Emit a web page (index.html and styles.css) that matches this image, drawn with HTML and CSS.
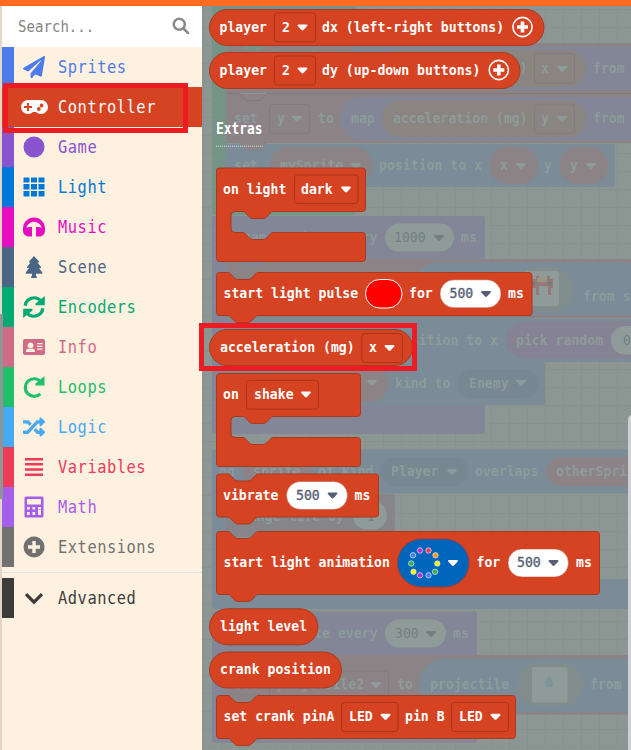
FILE: index.html
```
<!DOCTYPE html>
<html lang="en">
<head>
<meta charset="utf-8">
<title>Blocks editor</title>
<link rel="stylesheet" href="styles.css">
</head>
<body>
<div class="topbar"></div>
<main class="editor">
  <div class="edge"><div class="edge-shade"></div></div>
  <nav class="toolbox">
    <div class="search"><span>Search...</span>
      <svg class="search-icon" viewBox="0 0 18 18"><circle cx="7.3" cy="7.3" r="5.5"/><path d="M11.5 11.5L16 16"/></svg>
    </div>
    <div class="row sprites"><svg class="icon" viewBox="0 0 512 512"><path d="M476 3.2L12.5 270.6c-18.1 10.4-15.8 35.6 2.2 43.2L121 358.4l287.3-253.2c5.5-4.9 13.3 2.6 8.6 8.3L176 407v80.5c0 23.6 28.5 32.9 42.5 15.8L282 426l124.6 52.2c14.2 6 30.4-2.9 33-18.2l72-432C515 7.8 493.3-6.8 476 3.2z"/></svg><span>Sprites</span></div>
    <div class="row controller"><svg class="icon wide" viewBox="0 0 27 14"><path fill-rule="evenodd" d="M7 0h13a7 7 0 0 1 0 14q-3 0-5-2h-3q-2 2-5 2A7 7 0 0 1 7 0zM6 3v3H3v2h3v3h2V8h3V6H8V3zM20.5 3.6a1.9 1.9 0 1 0 .1 0zM17.8 7.1a1.9 1.9 0 1 0 .1 0z"/></svg><span>Controller</span></div>
    <div class="row game"><svg class="icon" viewBox="0 0 22 22"><circle cx="11" cy="11" r="10.500"/></svg><span>Game</span></div>
    <div class="row light"><svg class="icon" viewBox="0 0 22 22"><path d="M1 1.5h5.5v5H.5V2zM8 1.5h6v5H8zM15.5 1.5H21l.5.5v4.5h-6zM.5 8h6v5.500h-6zM8 8h6v5.500H8zM15.500 8h6v5.500h-6zM.5 15h6v5.500H1L.5 20zM8 15h6v5.500H8zM15.500 15h6v5l-.5.5h-5.500z"/></svg><span>Light</span></div>
    <div class="row music"><svg class="icon" viewBox="0 0 22 22"><path d="M11 1.500A11 11 0 0 0 0 12.500v2q0 4 3.500 5.500l1 .5H9V11H6q-1.500 0-2.500 1A7.600 7.600 0 0 1 18.500 12q-1-1-2.500-1h-3v9.500h4.500l1-.5Q22 18.500 22 14.500v-2a11 11 0 0 0-11-11z"/></svg><span>Music</span></div>
    <div class="row scene"><svg class="icon" viewBox="0 0 22 22"><path d="M11 0l5 5.500q.5 1-.5 1h-1l3.500 4.500q.5 1-.5 1h-1.500l3.300 4.500q.6 1.100-.6 1.200H13v1.800l1 1.500q.2 1-1 1H9q-1.200 0-1-1l1-1.500v-1.800H3.500q-1.500-.1-.7-1.200L6 12H4.500q-1 0-.5-1l3.500-4.500h-1q-1 0-.5-1z"/></svg><span>Scene</span></div>
    <div class="row encoders"><svg class="icon" viewBox="0 0 22 22"><g id="reload" class="line"><path d="M2.200 9.800A9 9 0 0 1 18 5"/><path class="head" d="M21.800.3v9H12.500V7.500L21.500.2z"/></g><use href="#reload" transform="rotate(180 11 11)"/></svg><span>Encoders</span></div>
    <div class="row info"><svg class="icon" viewBox="0 0 22 22"><path fill-rule="evenodd" d="M2 3h18q2 0 2 2v12q0 2-2 2H2q-2 0-2-2V5q0-2 2-2zM7.500 6.500a3 3 0 1 0 .1 0zM5 12.500q-2 .5-2 2.500v1h9v-1q0-2-2-2.500l-2.500.5zM14 7v1.300h5.500V7zM14 9.700V11h5.500V9.700zM14 12.400v1.300h5.500v-1.300z"/></svg><span>Info</span></div>
    <div class="row loops"><svg class="icon" viewBox="0 0 22 22"><g class="line"><path d="M17.500 5.500A8.800 8.800 0 1 0 17.300 17.800"/><path class="head" d="M21.500.5v9H12.500V7.600L21 .5z"/></g></svg><span>Loops</span></div>
    <div class="row logic"><svg class="icon" viewBox="0 0 512 512"><path d="M504.971 359.029c9.373 9.373 9.373 24.569 0 33.941l-80 79.984c-15.01 15.01-40.971 4.49-40.971-16.971V416h-58.785a12.004 12.004 0 0 1-8.773-3.812l-70.556-75.596 53.333-57.143L352 336h32v-39.981c0-21.438 25.943-31.998 40.971-16.971l80 79.981zM12 176h84l52.781 56.551 53.333-57.143-70.556-75.596A11.999 11.999 0 0 0 122.785 96H12c-6.627 0-12 5.373-12 12v56c0 6.627 5.373 12 12 12zm372 0v39.984c0 21.460 25.961 31.980 40.971 16.971l80-79.984c9.373-9.373 9.373-24.569 0-33.941l-80-79.981C409.943 24.021 384 34.582 384 56.019V96h-58.785a12.004 12.004 0 0 0-8.773 3.812L96 336H12c-6.627 0-12 5.373-12 12v56c0 6.627 5.373 12 12 12h110.785c3.326 0 6.503-1.381 8.773-3.812L352 176h32z"/></svg><span>Logic</span></div>
    <div class="row variables"><svg class="icon" viewBox="0 0 22 22"><path d="M2 2h18v2.600H2zM2 7h18v2.600H2zM2 12.200h18v2.600H2zM2 17.500h18v2.600H2z"/></svg><span>Variables</span></div>
    <div class="row math"><svg class="icon" viewBox="0 0 22 22"><path fill-rule="evenodd" d="M3 .5h16q1.500 0 1.500 1.500v18q0 1.500-1.500 1.500H3Q1.500 21.500 1.500 20V2Q1.500.5 3 .5zM4 3v5.500h14V3zM4 11v2.500h2.700V11zM9.500 11v2.500h2.700V11zM15 11v2.500h3V11zM4 16v3h2.700v-3zM9.500 16v3h2.700v-3zM15 13v6h3v-6z"/></svg><span>Math</span></div>
    <div class="row extensions"><svg class="icon" viewBox="0 0 22 22"><path fill-rule="evenodd" d="M11 .5a10.500 10.500 0 1 0 .1 0zM9.300 5h3.400v4.300H17v3.400h-4.300V17H9.300v-4.300H5V9.300h4.300z"/></svg><span>Extensions</span></div>
    <div class="divider"></div>
    <div class="row advanced"><svg class="icon" viewBox="0 0 22 22"><path class="chevron" d="M3 7.200l8 8 8-8"/></svg><span>Advanced</span></div>
  </nav>
  <svg class="canvas" viewBox="202 6 429 744" width="429" height="744">
    <defs>
      <pattern id="grid" x="5" y="9" width="18" height="18" patternUnits="userSpaceOnUse"><path d="M0 .5h18M.5 0v18" stroke="#87928f"/></pattern>
      <path id="arrow" d="M-4-3h8q1.500.4.700 1.600L1 2.600q-1 .9-2 0l-3.700-4Q-5.500-2.600-4-3z"/>
      <g id="plus"><circle r="9.600" fill="none" stroke="#fff" stroke-width="1.600"/><path d="M-5.500 0h11M0-5.500v11" stroke="#fff" stroke-width="3.600"/></g>
    </defs>
    <rect x="202" y="6" width="429" height="744" fill="#8c9692"/>
    <rect x="202" y="6" width="429" height="744" fill="url(#grid)"/>

    <!-- workspace stacks -->
    <g class="workspace">
      <path class="green" d="M212 6h144v3H226v194h126q4 0 4 4v4q0 4-4 4H216q-4 0-4-4z"/>
      <path class="rose" d="M226 43H631V93H226zM226 94H631V143H226z"/>
      <path class="green" d="M239 43l7 7h14l7-7z"/>
      <path class="seam" d="M226 93.500h13l7 7h14l7-7H631"/>
      <rect class="violet" x="340" y="46.500" width="310" height="43.500" rx="21.700"/>
      <rect class="violet" x="340" y="97" width="310" height="43.500" rx="21.700"/>
      <rect class="olive" x="382" y="50" width="204" height="37" rx="18.500"/>
      <rect class="olive" x="382" y="100.500" width="204" height="36.500" rx="18.200"/>
      <rect class="box" x="534.500" y="53.500" width="40" height="29.500" rx="3"/><rect class="box" x="534.500" y="104" width="40" height="29.500" rx="3"/><rect class="box" x="269.500" y="104.500" width="40" height="29" rx="3"/>
      <text x="519.500" y="73">)</text><text x="541" y="73">x</text><use href="#arrow" x="562" y="69"/><text x="593" y="73">from</text>
      <text x="234" y="123">set</text><text x="277" y="123">y</text><use href="#arrow" x="297" y="119"/><text x="318" y="123">to</text><text x="351" y="123">map</text><text x="393" y="123">acceleration (mg)</text><text x="541" y="123">y</text><use href="#arrow" x="562" y="119"/><text x="593" y="123">from</text>
      <path class="blue" d="M226 144H612q3 0 3 3v37q0 3-3 3H226z"/>
      <path class="rose" d="M239 143l7 7h14l7-7z"/>
      <rect class="rose" x="270" y="147" width="102" height="37" rx="18"/><rect class="rose" x="489.500" y="147" width="48.500" height="37" rx="18"/><rect class="rose" x="559.500" y="147" width="48.500" height="37" rx="18"/>
      <text x="234" y="170">set</text><text x="280" y="170">mySprite</text><use href="#arrow" x="356" y="166"/><text x="379" y="170">position to x</text><text x="500" y="170">x</text><use href="#arrow" x="521" y="166"/><text x="544" y="170">y</text><text x="570" y="170">y</text><use href="#arrow" x="591" y="166"/>

      <rect class="violet" x="212" y="216" width="273" height="43" rx="3"/>
      <path class="violet" d="M212 219h14V405H482q3 0 3 3v23q0 3-3 3H215q-3 0-3-3z"/>
      <text x="219" y="242">on game update every</text><rect class="pale" x="385" y="223.500" width="69" height="28" rx="14"/><text class="dark" x="394" y="242">1000</text><use class="dark" href="#arrow" x="439" y="238"/><text x="461" y="242">ms</text>
      <path class="rose" d="M226 259H631v59H226z"/><path class="violet" d="M239 259l7 7h14l7-7z"/>
      <rect class="blue" x="412" y="262.500" width="240" height="52.500" rx="26"/>
      <rect class="sage" x="514" y="266.500" width="60" height="45" rx="22"/><rect class="pale" x="525" y="271" width="34" height="35" rx="2"/>
      <path d="M532 279h4v-3h3v3h8v-3h3v3h3v9h-2v7h-3v-9h-9v9h-3v-7h-4z" fill="#96777a"/><path d="M537 278h10v4h-10z" fill="#99977d"/><path d="M532 282h3v3h-3zM548 282h3v3h-3z" fill="#65817f"/>
      <text x="583" y="301">from s</text>
      <path class="blue" d="M226 318.500H631V362H226zM226 362H542q3 0 3 3v37q0 3-3 3H226z"/>
      <text x="395" y="345">position to x</text><rect class="plum" x="505.500" y="321.500" width="160" height="37" rx="18"/><text x="516" y="345">pick random</text><rect class="pale" x="611" y="326" width="40" height="28.500" rx="14"/><text class="dark" x="623" y="345">0</text>
      <rect class="rose" x="270" y="365" width="118.500" height="37" rx="18"/><use href="#arrow" x="372" y="383"/><text x="395" y="388">kind to</text><rect class="slate" x="458" y="369" width="80" height="29" rx="14"/><text x="469" y="388">Enemy</text><use href="#arrow" x="521" y="383"/>

      <path class="blue" d="M215 449.500H631V493.500H226V579H631V609H215q-3 0-3-3V452.500q0-3 3-3z"/>
      <text x="219" y="476">on</text><rect class="rose" x="243" y="457.500" width="68" height="28.500" rx="14"/><text x="253" y="476">sprite</text><text x="318" y="476">of kind</text><rect class="slate" x="380" y="457.500" width="88.500" height="28.500" rx="14"/><text x="391" y="476">Player</text><use href="#arrow" x="452" y="472"/><text x="475" y="476">overlaps</text><rect class="rose" x="546.500" y="457.500" width="110" height="28.500" rx="14"/><text x="556" y="476">otherSpri</text>
      <path fill="#86858a" d="M226 494H392q3 0 3 3v37q0 3-3 3H226z"/><text x="233" y="521">change life by</text><rect class="pale" x="353" y="501.500" width="34" height="28" rx="14"/><text class="dark" x="367" y="521">1</text>

      <path class="violet" d="M215 611.500H474q3 0 3 3V655H226v59H477v26q0 3-3 3H215q-3 0-3-3V614.500q0-3 3-3z"/>
      <text x="314.200" y="638">te every</text><rect class="pale" x="385" y="619.500" width="61" height="28" rx="14"/><text class="dark" x="395" y="638">300</text><use class="dark" href="#arrow" x="431" y="634"/><text x="453" y="638">ms</text>
      <path class="rose" d="M226 655H631v59.500H226z"/><rect class="blue" x="419" y="658.500" width="240" height="53.500" rx="26"/>
      <rect class="box" x="269.500" y="671" width="119" height="29" rx="3"/><text x="234" y="689">set</text><text x="277" y="689">projectile2</text><use href="#arrow" x="376" y="685"/><text x="397" y="689">to</text><text x="430" y="689">projectile</text>
      <rect class="sage" x="517" y="663" width="66" height="43.500" rx="21.700"/><rect class="pale" x="532" y="667" width="35.500" height="35.500" rx="2"/><path fill="#7b9699" d="M549 675l4 7q1 5-4 5t-4-5z"/><text x="590" y="689">from</text>
    </g>

    <!-- flyout -->
    <g class="flyout">
      <rect class="block" x="209.500" y="9.500" width="334.500" height="36" rx="18"/><text x="219.500" y="32">player</text><rect class="field" x="274.500" y="12.800" width="41" height="29" rx="3"/><text x="282" y="32">2</text><use href="#arrow" x="302.500" y="27.500"/><text x="322" y="32">dx (left-right buttons)</text><use href="#plus" x="522.500" y="27"/>
      <rect class="block" x="209.500" y="52.500" width="310.500" height="36" rx="18"/><text x="219.500" y="75">player</text><rect class="field" x="274.500" y="56" width="41" height="29" rx="3"/><text x="282" y="75">2</text><use href="#arrow" x="302.500" y="70.500"/><text x="322" y="75">dy (up-down buttons)</text><use href="#plus" x="498.800" y="70"/>
      <text class="heading" transform="translate(216 133.500) scale(1 1.170)">Extras</text><path d="M216 146.200h47" stroke="#dfe3e1" stroke-dasharray="1 1"/>

      <path class="block" d="M219.500 168H362.500q3 0 3 3V208.500q0 3-3 3H272l-5.500 5.500q-1.500 1.500-3.500 1.500H253q-2 0-3.500-1.500L244 211.500H235q-4 0-4 4V228.500q0 4 4 4H244l5.500 5.500q1.500 1.500 3.500 1.500H263q2 0 3.500-1.500L272 232.500H362.500q3 0 3 3V258.500q0 3-3 3H219.500q-3 0-3-3V171q0-3 3-3z"/>
      <text x="223" y="194">on light</text><rect class="field" x="294.500" y="175" width="63.500" height="28.500" rx="3"/><text x="301" y="194">dark</text><use href="#arrow" x="346" y="189.500"/>

      <path class="block" d="M219.500 272.500H229l5.500 5.500q1.500 1.500 3.500 1.500H248q2 0 3.500-1.500L257 272.500H529q3 0 3 3V312.500q0 3-3 3H257l-5.500 5.500q-1.500 1.500-3.500 1.500H238q-2 0-3.500-1.500L229 315.500H219.500q-3 0-3-3V275.500q0-3 3-3z"/>
      <text x="223.500" y="298">start light pulse</text><rect x="365.500" y="279.500" width="36.500" height="28.500" rx="14.200" fill="#f00" stroke="#fff"/><text x="409" y="298">for</text><rect class="pill" x="440" y="279.800" width="61" height="28" rx="14"/><text class="value" x="449.500" y="298">500</text><use class="value" href="#arrow" x="486" y="294"/><text x="508" y="298">ms</text>

      <rect class="block" x="209.500" y="329.500" width="203" height="36" rx="18"/><text x="220" y="352">acceleration (mg)</text><rect class="field" x="361.800" y="333.500" width="40.500" height="29" rx="3"/><text x="369" y="352">x</text><use href="#arrow" x="389.500" y="348"/>

      <path class="block" d="M219.500 373.500H357.500q3 0 3 3V413.500q0 3-3 3H272l-5.500 5.500q-1.500 1.500-3.500 1.500H253q-2 0-3.500-1.500L244 416.500H235q-4 0-4 4V433.500q0 4 4 4H244l5.500 5.500q1.500 1.500 3.500 1.500H263q2 0 3.500-1.500L272 437.500H357.500q3 0 3 3V463.500q0 3-3 3H219.500q-3 0-3-3V376.500q0-3 3-3z"/>
      <text x="223" y="399">on</text><rect class="field" x="246.500" y="380.300" width="72" height="28.800" rx="3"/><text x="254" y="399">shake</text><use href="#arrow" x="306" y="394.500"/>

      <path class="block" d="M219.500 474H229l5.500 5.500q1.500 1.500 3.500 1.500H248q2 0 3.500-1.500L257 474H375.500q3 0 3 3V514q0 3-3 3H257l-5.500 5.500q-1.500 1.500-3.500 1.500H238q-2 0-3.500-1.500L229 517H219.500q-3 0-3-3V477q0-3 3-3z"/>
      <text x="223" y="500">vibrate</text><rect class="pill" x="286.500" y="481.500" width="61" height="28" rx="14"/><text class="value" x="296" y="500">500</text><use class="value" href="#arrow" x="332.500" y="495.500"/><text x="354.500" y="500">ms</text>

      <path class="block" d="M219.500 531.500H229l5.500 5.500q1.500 1.500 3.500 1.500H248q2 0 3.500-1.500L257 531.500H596.500q3 0 3 3V591.500q0 3-3 3H257l-5.500 5.500q-1.500 1.500-3.500 1.500H238q-2 0-3.500-1.500L229 594.500H219.500q-3 0-3-3V534.500q0-3 3-3z"/>
      <text x="223.500" y="567">start light animation</text><rect x="397.500" y="539" width="71.500" height="48" rx="24" fill="#0065bb" stroke="#8e3f45"/>
      <g class="ring"><circle cx="420" cy="550.500" r="2.700" fill="#b52bd8"/><circle cx="428.500" cy="550.500" r="2.700" fill="#ed3b59"/><circle cx="435.500" cy="555.300" r="2.700" fill="#ff961f"/><circle cx="437.300" cy="563.500" r="2.700" fill="#fff200"/><circle cx="435" cy="571.800" r="2.700" fill="#3aaf48"/><circle cx="428.500" cy="575.300" r="2.700" fill="#4280ff"/><circle cx="420" cy="575.300" r="2.700" fill="#b52bd8"/><circle cx="413.500" cy="571.800" r="2.700" fill="#fff200"/><circle cx="411.200" cy="563.500" r="2.700" fill="#3aaf48"/><circle cx="413" cy="555.300" r="2.700" fill="#4280ff"/></g>
      <use href="#arrow" x="453" y="563"/><text x="476.500" y="567">for</text><rect class="pill" x="508" y="549" width="60.500" height="28" rx="14"/><text class="value" x="517" y="567">500</text><use class="value" href="#arrow" x="553.500" y="563"/><text x="576" y="567">ms</text>

      <rect class="block" x="209.500" y="608.800" width="108.500" height="36" rx="18"/><text x="220" y="631">light level</text>
      <rect class="block" x="209.500" y="652" width="132" height="36" rx="18"/><text x="220" y="674">crank position</text>

      <path class="block" d="M219.500 695.500H229l5.500 5.500q1.500 1.500 3.500 1.500H248q2 0 3.500-1.500L257 695.500H512.500q3 0 3 3V735.500q0 3-3 3H257l-5.500 5.500q-1.500 1.500-3.500 1.500H238q-2 0-3.500-1.500L229 738.500H219.500q-3 0-3-3V698.500q0-3 3-3z"/>
      <text x="223.500" y="721">set crank pinA</text><rect class="field" x="341.500" y="702.500" width="56.500" height="29" rx="3"/><text x="349" y="721">LED</text><use href="#arrow" x="385.500" y="716.800"/><text x="405" y="721">pin B</text><rect class="field" x="451.500" y="702.500" width="57" height="29" rx="3"/><text x="459" y="721">LED</text><use href="#arrow" x="495.500" y="716.800"/>
    </g>
    <path d="M631 415q-3 1-3 5V750h3z" fill="#cfcfd1"/>
  </svg>
</main>
<div class="callout callout-controller"></div>
<div class="callout callout-acceleration"></div>
</body>
</html>
```
FILE: styles.css
```
* { box-sizing: border-box; }
body { margin: 0; width: 631px; height: 750px; overflow: hidden; position: relative; background: #fef1df; }
.topbar { height: 6px; background: #fb6b21; }
.editor { display: flex; height: 744px; }
.edge { width: 2px; background: #e4d6c6; padding-top: 308px; }
.edge-shade { width: 3px; height: 185px; background: #8f9594; position: relative; z-index: 1; }
.toolbox { width: 200px; flex: none; background: #fef1df; font-family: "DejaVu Sans Mono", "Liberation Mono", monospace; }
.search { height: 41px; background: #fff; color: #858585; display: flex; align-items: center; justify-content: space-between; padding: 0 12px 1px 16px; font-size: 14px; letter-spacing: .05px; }
.search-icon { width: 18px; height: 18px; fill: none; stroke: #8a8a8a; stroke-width: 2.500; stroke-linecap: round; }
.search span, .row span { transform: scaleY(1.140); }
.row { height: 40px; display: flex; align-items: center; gap: 13px; padding-left: 9px; border-left: 12px solid currentColor; font-size: 15.400px; letter-spacing: .53px; }
.icon { width: 22px; height: 22px; flex: none; fill: currentColor; }
.icon.wide { width: 27px; height: 14px; margin: 0 -3px 0 -2px; }
.line { fill: none; stroke: currentColor; stroke-width: 3.200; }
.line .head { fill: currentColor; stroke: none; }
.chevron { fill: none; stroke: currentColor; stroke-width: 3.200; }
.sprites { color: #4b7bec; }
.controller { background: #d54322; border-left-color: #d54322; color: #fff; }
.game { color: #8854d0; }
.light { color: #0078d7; }
.music { color: #e60ec0; }
.scene { color: #4b6584; }
.encoders { color: #03aa74; }
.info { color: #cf6a87; }
.loops { color: #20bf6b; }
.logic { color: #45aaf2; }
.variables { color: #ed3b59; }
.math { color: #a55eea; }
.extensions { color: #717171; }
.advanced { color: #3c3c3c; }
.divider { height: 11px; border-bottom: 5px solid #fef1df; background: linear-gradient(#fef1df 5px, #dfe2e5 5px); }
.canvas { display: block; flex: none; }
.canvas text { font: bold 13.170px "DejaVu Sans Mono", "Liberation Mono", monospace; white-space: pre; }
.workspace { fill: #8d9b9a; }
.workspace .green { fill: #739486; }
.workspace .rose { fill: #8c8387; }
.workspace .violet { fill: #828696; }
.workspace .blue { fill: #7b8b98; }
.workspace .olive { fill: #8a8581; }
.workspace .slate { fill: #788792; }
.workspace .sage { fill: #818d8d; }
.workspace .plum { fill: #858294; }
.workspace .pale { fill: #8f9b98; }
.workspace .dark { fill: #737f80; }
.workspace .box { fill: none; stroke: #837b80; }
.workspace .seam { fill: none; stroke: #81787c; }
.flyout { fill: #fff; }
.block { fill: #d54322; stroke: #a83a22; }
.field { fill: none; stroke: #aa351b; }
.pill { fill: #fff; stroke: #b44a32; stroke-width: .5; }
.flyout .value { fill: #575e75; }
.canvas .value, .canvas .dark { font-weight: normal; }
.canvas text.value { stroke: #575e75; stroke-width: .35; }
.canvas .heading { font-size: 12.900px; }
.ring { stroke: #dce8f5; stroke-width: .7; }
.callout { position: absolute; border: 5px solid #ed1c24; }
.callout-controller { left: 3px; top: 83px; width: 185px; height: 50px; }
.callout-acceleration { left: 199px; top: 323px; width: 218px; height: 48px; z-index: 2; }
```
